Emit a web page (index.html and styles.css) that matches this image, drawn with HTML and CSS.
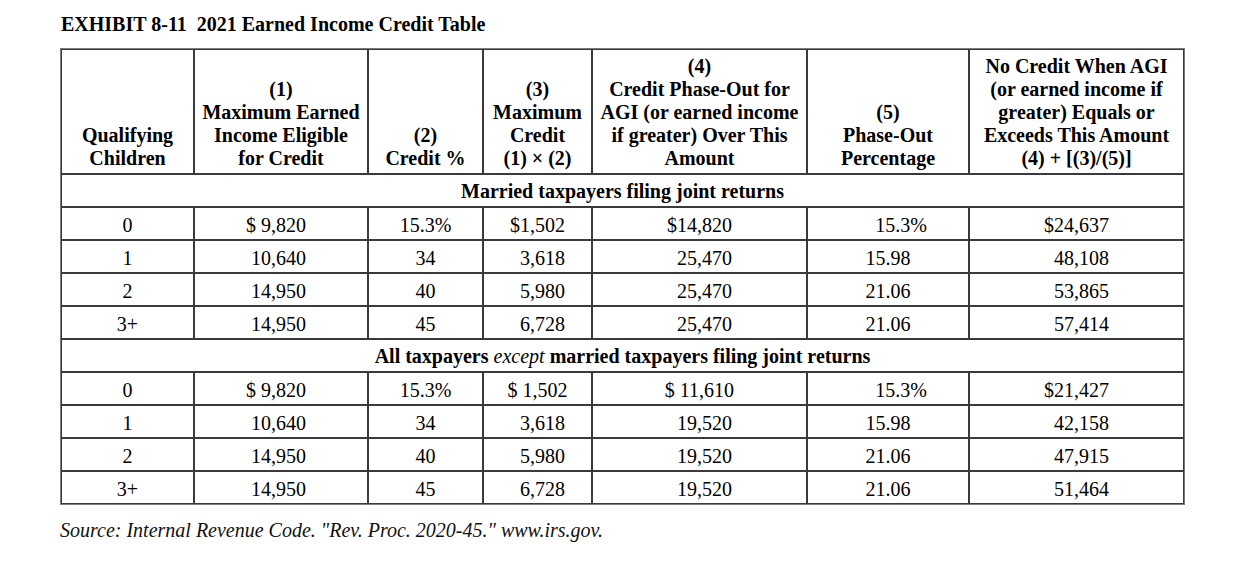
FILE: index.html
```html
<!DOCTYPE html>
<html>
<head>
<meta charset="utf-8">
<link rel="stylesheet" href="styles.css">
</head>
<body>
<div class="page">
  <h1 class="title">EXHIBIT 8-11&nbsp; 2021 Earned Income Credit Table</h1>
  <table class="eic">
    <colgroup>
      <col class="c0"><col class="c1"><col class="c2"><col class="c3"><col class="c4"><col class="c5"><col class="c6">
    </colgroup>
    <thead>
      <tr>
        <th>Qualifying<br>Children</th>
        <th>(1)<br>Maximum Earned<br>Income Eligible<br>for Credit</th>
        <th>(2)<br>Credit %</th>
        <th>(3)<br>Maximum<br>Credit<br>(1) × (2)</th>
        <th>(4)<br>Credit Phase-Out for<br>AGI (or earned income<br>if greater) Over This<br>Amount</th>
        <th>(5)<br>Phase-Out<br>Percentage</th>
        <th>No Credit When AGI<br>(or earned income if<br>greater) Equals or<br>Exceeds This Amount<br>(4) + [(3)/(5)]</th>
      </tr>
    </thead>
    <tbody>
      <tr class="section"><td colspan="7">Married taxpayers filing joint returns</td></tr>
      <tr><td>0</td><td>$ 9,820</td><td>15.3%</td><td>$1,502</td><td>$14,820</td><td class="shift">15.3%</td><td>$24,637</td></tr>
      <tr><td>1</td><td>&nbsp;10,640</td><td>34</td><td>&#8199;3,618</td><td>&#8199;25,470</td><td>15.98</td><td>&#8199;48,108</td></tr>
      <tr><td>2</td><td>&nbsp;14,950</td><td>40</td><td>&#8199;5,980</td><td>&#8199;25,470</td><td>21.06</td><td>&#8199;53,865</td></tr>
      <tr><td>3+</td><td>&nbsp;14,950</td><td>45</td><td>&#8199;6,728</td><td>&#8199;25,470</td><td>21.06</td><td>&#8199;57,414</td></tr>
      <tr class="section"><td colspan="7">All taxpayers <i>except</i> married taxpayers filing joint returns</td></tr>
      <tr><td>0</td><td>$ 9,820</td><td>15.3%</td><td>$ 1,502</td><td>$ 11,610</td><td class="shift">15.3%</td><td>$21,427</td></tr>
      <tr><td>1</td><td>&nbsp;10,640</td><td>34</td><td>&#8199;3,618</td><td>&#8199;19,520</td><td>15.98</td><td>&#8199;42,158</td></tr>
      <tr><td>2</td><td>&nbsp;14,950</td><td>40</td><td>&#8199;5,980</td><td>&#8199;19,520</td><td>21.06</td><td>&#8199;47,915</td></tr>
      <tr><td>3+</td><td>&nbsp;14,950</td><td>45</td><td>&#8199;6,728</td><td>&#8199;19,520</td><td>21.06</td><td>&#8199;51,464</td></tr>
    </tbody>
  </table>
  <p class="source">Source: Internal Revenue Code. "Rev. Proc. 2020-45." www.irs.gov.</p>
</div>
</body>
</html>
```

FILE: styles.css
```css
html, body {
  margin: 0;
  padding: 0;
  background: #ffffff;
}

body {
  font-family: "Liberation Serif", "Times New Roman", serif;
  color: #000000;
}

.page {
  padding: 12px 0 0 60px;
}

.title {
  margin: 0;
  font-size: 20px;
  line-height: 24px;
  font-weight: bold;
  padding-left: 1px;
}

.eic {
  margin-top: 12px;
  border-collapse: separate;
  border-spacing: 0;
  border: 1px solid #7a7a7a;
  table-layout: fixed;
  width: 1123px;
  font-size: 20px;
}

.c0 { width: 133px; }
.c1 { width: 174px; }
.c2 { width: 115px; }
.c3 { width: 109px; }
.c4 { width: 215px; }
.c5 { width: 162px; }
.c6 { width: 215px; }

.eic th,
.eic td {
  border: 1px solid #3a3a3a;
  text-align: center;
  padding: 0;
}

.eic th {
  vertical-align: bottom;
  font-weight: bold;
  line-height: 23px;
  height: 120px;
  padding: 0 2px 3px;
}

.eic td {
  height: 28px;
  line-height: 28px;
  padding-top: 3px;
  vertical-align: middle;
}

.eic tbody tr:not(.section) td:nth-child(2) {
  padding-right: 10px;
}

.eic .section td {
  font-weight: bold;
  padding-top: 2px;
  height: 29px;
  line-height: 29px;
}

.eic .section td i {
  font-weight: normal;
}

.eic td.shift {
  padding-left: 26px;
}

.source {
  margin: 14px 0 0 0;
  font-style: italic;
  font-size: 20px;
  color: #111111;
}
```
